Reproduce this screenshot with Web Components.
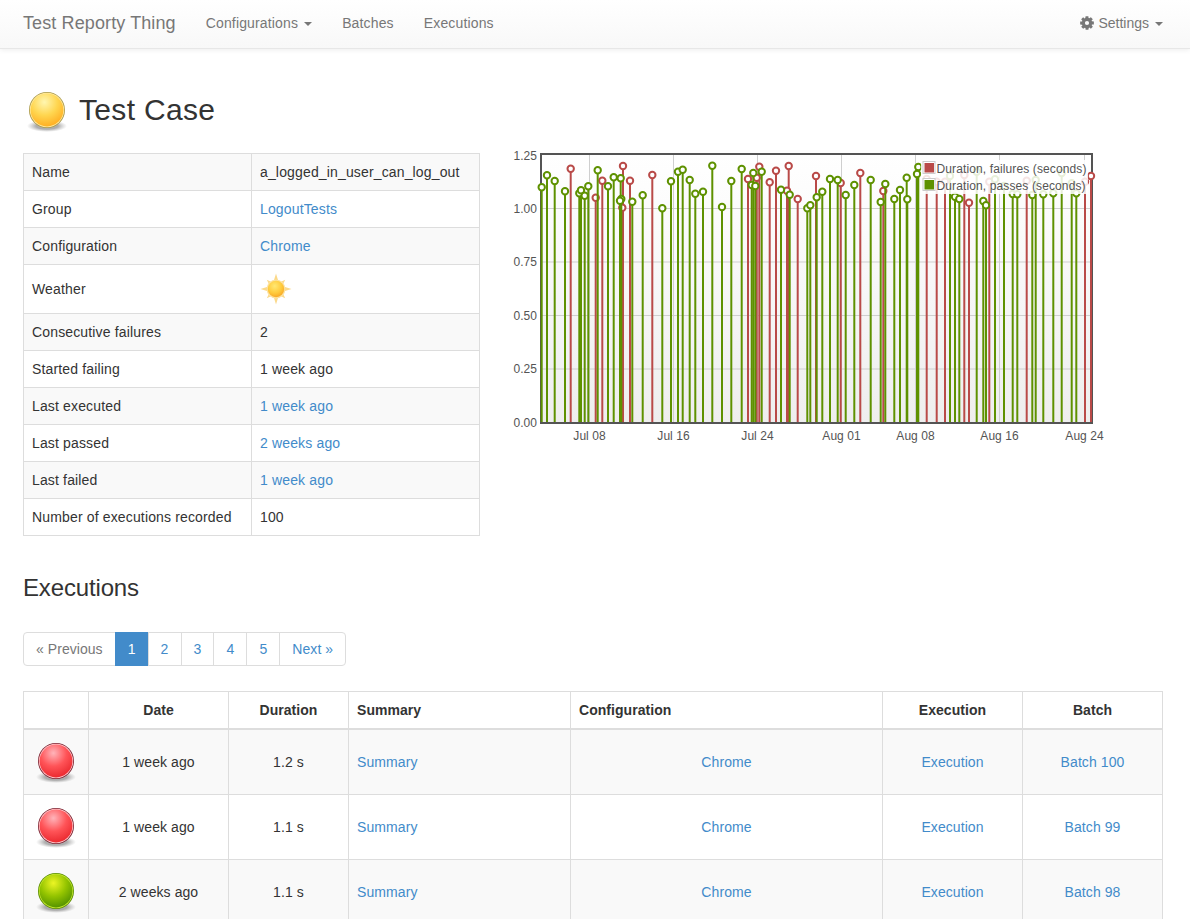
<!DOCTYPE html>
<html>
<head>
<meta charset="utf-8">
<title>Test Reporty Thing</title>
<style>
    html, body { margin: 0; height: 919px; overflow: hidden; background: #fff; }
    body { font-family: "Liberation Sans", Arial, sans-serif; font-size: 14px; line-height: 20px; color: #333; letter-spacing: .15px; }
    a { color: #428bca; text-decoration: none; }
    main { display: block; padding: 37px 27px 0 23px; }
    .top { display: flex; gap: 25px; margin-top: 19px; }
</style>
</head>
<body>
<app-navbar brand="Test Reporty Thing"></app-navbar>
<main>
    <page-heading status="yellow">Test Case</page-heading>
    <div class="top">
        <info-table>
            <info-row label="Name">a_logged_in_user_can_log_out</info-row>
            <info-row label="Group"><a href="#">LogoutTests</a></info-row>
            <info-row label="Configuration"><a href="#">Chrome</a></info-row>
            <info-row label="Weather"><sun-icon></sun-icon></info-row>
            <info-row label="Consecutive failures">2</info-row>
            <info-row label="Started failing">1 week ago</info-row>
            <info-row label="Last executed"><a href="#">1 week ago</a></info-row>
            <info-row label="Last passed"><a href="#">2 weeks ago</a></info-row>
            <info-row label="Last failed"><a href="#">1 week ago</a></info-row>
            <info-row label="Number of executions recorded">100</info-row>
        </info-table>
        <duration-chart></duration-chart>
    </div>
    <section-title>Executions</section-title>
    <page-nav></page-nav>
    <exec-table>
        <exec-row status="red" date="1 week ago" duration="1.2 s" batch="Batch 100"></exec-row>
        <exec-row status="red" date="1 week ago" duration="1.1 s" batch="Batch 99"></exec-row>
        <exec-row status="green" date="2 weeks ago" duration="1.1 s" batch="Batch 98"></exec-row>
    </exec-table>
</main>

<script>
const BALLS = {
    yellow: { hi: '#fff6b0', mid: '#ffd650', edge: '#ffa91c', ring: '#ffe9a0', line: '#ab9a48' },
    red: { hi: '#ffb4ba', mid: '#ff5458', edge: '#e8242a', ring: '#ffc8cc', line: '#7c2230' },
    green: { hi: '#ecf524', mid: '#94c400', edge: '#4c8c00', ring: '#c4e830', line: '#5a8c00' }
};

class StatusBall extends HTMLElement {
    constructor() {
        super();
        this.attachShadow({ mode: "open" });
    }

    connectedCallback() {
        const c = BALLS[this.getAttribute('status')] || BALLS.yellow;
        this.shadowRoot.innerHTML = `
        <style>
            :host { display: block; flex: none; width: 48px; height: 48px; }
            svg { display: block; }
        </style>
        <svg width="48" height="48" viewBox="0 0 48 48">
            <defs>
                <radialGradient id="g" cx="0.42" cy="0.26" r="0.8">
                    <stop offset="0" stop-color="${c.hi}"/>
                    <stop offset="0.5" stop-color="${c.mid}"/>
                    <stop offset="1" stop-color="${c.edge}"/>
                </radialGradient>
                <radialGradient id="s" cx="0.5" cy="0.5" r="0.5">
                    <stop offset="0.55" stop-color="#777" stop-opacity="0.6"/>
                    <stop offset="1" stop-color="#999" stop-opacity="0"/>
                </radialGradient>
            </defs>
            <ellipse cx="24" cy="40" rx="20" ry="6" fill="url(#s)"/>
            <circle cx="24" cy="24" r="18" fill="${c.line}"/>
            <circle cx="24" cy="24" r="17.2" fill="${c.ring}"/>
            <circle cx="24" cy="24" r="16.4" fill="url(#g)"/>
        </svg>`;
    }
}

class SunIcon extends HTMLElement {
    constructor() {
        super();
        this.attachShadow({ mode: "open" });
    }

    connectedCallback() {
        let rays = '';
        for (let i = 0; i < 8; i++) {
            const long = i % 2 == 0;
            rays += `<polygon points="14,${long ? 7 : 8.5} 18,${long ? 7 : 8.5} 16,${long ? 0.5 : 3}" transform="rotate(${i * 45} 16 16)" fill="#fbd98a"/>`;
        }
        this.shadowRoot.innerHTML = `
        <style>
            :host { display: block; width: 32px; height: 32px; }
            svg { display: block; }
        </style>
        <svg width="32" height="32" viewBox="0 0 32 32">
            <defs>
                <radialGradient id="g" cx="0.42" cy="0.32" r="0.7">
                    <stop offset="0" stop-color="#ffe873"/>
                    <stop offset="0.6" stop-color="#ffcb3c"/>
                    <stop offset="1" stop-color="#f9a825"/>
                </radialGradient>
            </defs>
            ${rays}
            <circle cx="16" cy="16" r="9.4" fill="#fce2a0"/>
            <circle cx="16" cy="16" r="8.2" fill="url(#g)"/>
        </svg>`;
    }
}

class AppNavbar extends HTMLElement {
    constructor() {
        super();
        this.attachShadow({ mode: "open" });
    }

    gear() {
        let pts = [];
        for (let i = 0; i < 8; i++) {
            const a = i * Math.PI / 4;
            [[-0.34, 5.2], [-0.2, 7], [0.2, 7], [0.3, 5.2]].forEach(([w, r]) => {
                pts.push((7 + r * Math.sin(a + w)).toFixed(2) + ',' + (7 - r * Math.cos(a + w)).toFixed(2));
            });
        }
        return `<svg width="14" height="14" viewBox="0 0 14 14">
            <path fill="#777" fill-rule="evenodd" d="M${pts.join('L')}Z M7 4.9a2.1 2.1 0 1 0 0 4.2a2.1 2.1 0 1 0 0-4.2Z"/>
        </svg>`;
    }

    connectedCallback() {
        this.shadowRoot.innerHTML = `
        <style>
            :host {
                display: block;
                height: 48px;
                border-bottom: 1px solid #e7e7e7;
                background: linear-gradient(to bottom, #fff 0, #f8f8f8 100%);
                box-shadow: 0 1px 5px rgba(0, 0, 0, .075);
                color: #777;
            }
            nav { display: flex; align-items: center; height: 46px; padding: 0 27px 0 23px; }
            .brand { font-size: 18px; padding-right: 15px; letter-spacing: .11px; }
            .item { display: flex; align-items: center; padding: 0 15px; }
            .right { margin-left: auto; padding-right: 0; letter-spacing: 0; }
            .caret {
                width: 0; height: 0; margin-left: 6px; margin-top: 1px;
                border-top: 4px solid #777;
                border-left: 4px solid transparent;
                border-right: 4px solid transparent;
            }
            svg { display: block; margin-right: 4px; }
        </style>
        <nav>
            <span class="brand">${this.getAttribute('brand')}</span>
            <span class="item">Configurations<span class="caret"></span></span>
            <span class="item">Batches</span>
            <span class="item">Executions</span>
            <span class="item right">${this.gear()}Settings<span class="caret"></span></span>
        </nav>`;
    }
}

class PageHeading extends HTMLElement {
    constructor() {
        super();
        this.attachShadow({ mode: "open" });
    }

    connectedCallback() {
        this.shadowRoot.innerHTML = `
        <style>
            :host { display: flex; align-items: center; gap: 8px; height: 48px; font-size: 30px; line-height: 33px; letter-spacing: .33px; }
            div { padding-bottom: 2px; }
        </style>
        <status-ball status="${this.getAttribute('status')}"></status-ball>
        <div><slot></slot></div>`;
    }
}

class SectionTitle extends HTMLElement {
    constructor() {
        super();
        this.attachShadow({ mode: "open" });
    }

    connectedCallback() {
        this.shadowRoot.innerHTML = `
        <style>
            :host { display: block; font-size: 24px; line-height: 26px; margin: 39px 0 31px; letter-spacing: -.15px; }
        </style>
        <slot></slot>`;
    }
}

class InfoTable extends HTMLElement {
    constructor() {
        super();
        this.attachShadow({ mode: "open" });
    }

    connectedCallback() {
        this.shadowRoot.innerHTML = `
        <style>
            :host {
                display: table;
                flex: none;
                width: 456px;
                table-layout: fixed;
                border-collapse: collapse;
            }
        </style>
        <slot></slot>`;
    }
}

class InfoRow extends HTMLElement {
    constructor() {
        super();
        this.attachShadow({ mode: "open" });
    }

    connectedCallback() {
        this.shadowRoot.innerHTML = `
        <style>
            :host { display: table-row; }
            :host(:nth-child(odd)) { background: #f9f9f9; }
            .cell { display: table-cell; padding: 8px; border: 1px solid #ddd; vertical-align: middle; }
            .label { width: 211px; }
            ::slotted(a) { color: #428bca; text-decoration: none; }
        </style>
        <div class="cell label">${this.getAttribute('label')}</div>
        <div class="cell"><slot></slot></div>`;
    }
}

class DurationChart extends HTMLElement {
    constructor() {
        super();
        this.attachShadow({ mode: "open" });
        this.failures = [[570.7,168.7],[595.7,197.7],[602.3,180.7],[623,166],[622.3,207.7],[630,180.7],[652.3,175],[748,179],[756.7,177.7],[759.3,166.7],[769.7,182.3],[776,170.7],[788.7,166],[787,190.7],[797.7,199],[816,176],[840.7,183],[860.3,173],[883.3,191],[926.7,179],[936.7,181.7],[945,181.7],[964.3,175],[969,202.7],[989.3,181.7],[1026.7,180.7],[1085,181.7],[1091,176]];
        this.passes = [[541.7,187.3],[547,175.3],[554.7,181],[565,191.3],[579.3,193.3],[581,190.3],[584.7,195.7],[588.3,186.3],[597.7,170.3],[608,186.3],[613.7,177.3],[620.7,178.3],[621.3,199],[620,200.7],[632.3,201.7],[642.7,195.3],[662.3,208.3],[671,181.3],[678,171.7],[682.7,169.7],[689.7,180],[695.3,193.7],[703,191.7],[712.3,165.7],[722,207],[731.3,181],[741.7,169],[753.3,173],[751.7,185],[755.3,186],[761.7,171.7],[781,189.7],[789.7,194.7],[807.3,208.3],[810.3,205.3],[816.7,197.3],[822.3,191.7],[830,179],[837.7,180],[845.7,195],[854.3,185],[870.7,180],[880.7,202],[885.3,184],[894.3,199],[900,190],[906.7,177.7],[907.3,199.3],[917,174],[918.3,167],[950,176],[955,196.7],[959.3,199],[976.7,171.7],[983.3,201],[986,205.3],[995,179.3],[1004,186],[1012.7,194],[1017.3,194.3],[1032.3,195],[1035.7,180],[1043.3,194.3],[1053.3,193.3],[1061.7,173],[1071.7,183.3],[1076.3,193.3]];
    }

    series(points, color) {
        const lines = points.map(([x, y]) => `<line x1="${x}" y1="${y}" x2="${x}" y2="422"/>`).join('');
        const dots = points.map(([x, y]) => `<circle cx="${x}" cy="${y}" r="3.2"/>`).join('');
        return `<g stroke="${color}" stroke-width="2">${lines}</g>
            <g stroke="${color}" stroke-width="2" fill="#fff">${dots}</g>`;
    }

    connectedCallback() {
        const yTicks = [['1.25', 155.6], ['1.00', 208.5], ['0.75', 262], ['0.50', 315.5], ['0.25', 369], ['0.00', 422.5]];
        const xTicks = [['Jul 08', 589.5], ['Jul 16', 673.5], ['Jul 24', 757.5], ['Aug 01', 841.5], ['Aug 08', 915.5], ['Aug 16', 999.5], ['Aug 24', 1084.5]];
        const grid = yTicks.slice(1, 5).map(t => `<line x1="541" x2="1092" y1="${t[1]}" y2="${t[1]}"/>`).join('')
            + xTicks.map(t => `<line x1="${t[1]}" x2="${t[1]}" y1="154" y2="423"/>`).join('');
        const yLabels = yTicks.map(t => `<text x="537" y="${t[1] + 4}" text-anchor="end">${t[0]}</text>`).join('');
        const xLabels = xTicks.map(t => `<text x="${t[1]}" y="440" text-anchor="middle">${t[0]}</text>`).join('');
        this.shadowRoot.innerHTML = `
        <style>
            :host { display: block; flex: none; width: 620px; height: 300px; }
            svg { display: block; overflow: visible; }
            text { font-family: "Liberation Sans", Arial, sans-serif; font-size: 12px; letter-spacing: .05px; fill: #545454; }
            .legend { letter-spacing: .12px; }
        </style>
        <svg width="620" height="300" viewBox="505 153 620 300">
            <defs>
                <linearGradient id="bg" x1="0" y1="0" x2="0" y2="1">
                    <stop offset="0" stop-color="#fff"/>
                    <stop offset="1" stop-color="#eee"/>
                </linearGradient>
            </defs>
            <rect x="541" y="154" width="551" height="269" fill="url(#bg)"/>
            <g stroke="#cfcfcf" stroke-width="1">${grid}</g>
            <rect x="541" y="154" width="551" height="269" fill="none" stroke="#545454" stroke-width="2"/>
            ${this.series(this.failures, '#b94a48')}
            ${this.series(this.passes, '#5e9100')}
            ${yLabels}${xLabels}
            <rect x="921" y="160" width="167" height="34" fill="#fff" fill-opacity="0.85"/>
            <rect x="923" y="161.5" width="12" height="12" fill="#fff" stroke="#ccc"/>
            <rect x="924.5" y="163" width="9.5" height="9.5" fill="#b94a48"/>
            <rect x="923" y="178.5" width="12" height="12" fill="#fff" stroke="#ccc"/>
            <rect x="924.5" y="180" width="9.5" height="9.5" fill="#5e9100"/>
            <text class="legend" x="936.5" y="173">Duration, failures (seconds)</text>
            <text class="legend" x="936.5" y="190">Duration, passes (seconds)</text>
        </svg>`;
    }
}

class PageNav extends HTMLElement {
    constructor() {
        super();
        this.attachShadow({ mode: "open" });
    }

    connectedCallback() {
        const pages = ['1', '2', '3', '4', '5'];
        this.shadowRoot.innerHTML = `
        <style>
            :host { display: flex; width: max-content; margin-bottom: 25px; }
            span {
                display: block;
                padding: 6px 12px;
                margin-left: -1px;
                border: 1px solid #ddd;
                color: #428bca;
                background: #fff;
            }
            .prev { color: #777; margin-left: 0; border-radius: 4px 0 0 4px; letter-spacing: .05px; }
            .next { border-radius: 0 4px 4px 0; letter-spacing: .05px; }
            .active { background: #428bca; border-color: #428bca; color: #fff; }
        </style>
        <span class="prev">« Previous</span>
        ${pages.map(p => `<span class="${p == '1' ? 'active' : ''}">${p}</span>`).join('')}
        <span class="next">Next »</span>`;
    }
}

class ExecTable extends HTMLElement {
    constructor() {
        super();
        this.attachShadow({ mode: "open" });
    }

    connectedCallback() {
        const head = [['', 64, 1], ['Date', 139, 1], ['Duration', 119, 1], ['Summary', 221, 0], ['Configuration', 311, 0], ['Execution', 139, 1], ['Batch', 139, 1]];
        this.shadowRoot.innerHTML = `
        <style>
            :host { display: table; width: 1139px; table-layout: fixed; border-collapse: collapse; }
            .head { display: table-row; }
            .cell {
                display: table-cell;
                padding: 8px;
                border: 1px solid #ddd;
                border-bottom-width: 2px;
                font-weight: bold;
                letter-spacing: .05px;
            }
            .mid { text-align: center; }
        </style>
        <div class="head">
            ${head.map(h => `<div class="cell ${h[2] ? 'mid' : ''}" style="width:${h[1] - 16}px">${h[0]}</div>`).join('')}
        </div>
        <slot></slot>`;
    }
}

class ExecRow extends HTMLElement {
    constructor() {
        super();
        this.attachShadow({ mode: "open" });
    }

    connectedCallback() {
        this.shadowRoot.innerHTML = `
        <style>
            :host { display: table-row; letter-spacing: .08px; }
            :host(:nth-child(odd)) { background: #f9f9f9; }
            .cell { display: table-cell; padding: 8px; border: 1px solid #ddd; vertical-align: middle; text-align: center; }
            .ball { padding: 7px 0 9px; }
            status-ball { margin: 0 auto; }
            .left { text-align: left; }
            a { color: #428bca; text-decoration: none; }
        </style>
        <div class="cell ball"><status-ball status="${this.getAttribute('status')}"></status-ball></div>
        <div class="cell">${this.getAttribute('date')}</div>
        <div class="cell">${this.getAttribute('duration')}</div>
        <div class="cell left"><a href="#">Summary</a></div>
        <div class="cell"><a href="#">Chrome</a></div>
        <div class="cell"><a href="#">Execution</a></div>
        <div class="cell"><a href="#">${this.getAttribute('batch')}</a></div>`;
    }
}

customElements.define('status-ball', StatusBall);
customElements.define('sun-icon', SunIcon);
customElements.define('app-navbar', AppNavbar);
customElements.define('page-heading', PageHeading);
customElements.define('section-title', SectionTitle);
customElements.define('info-table', InfoTable);
customElements.define('info-row', InfoRow);
customElements.define('duration-chart', DurationChart);
customElements.define('page-nav', PageNav);
customElements.define('exec-table', ExecTable);
customElements.define('exec-row', ExecRow);
</script>
</body>
</html>
